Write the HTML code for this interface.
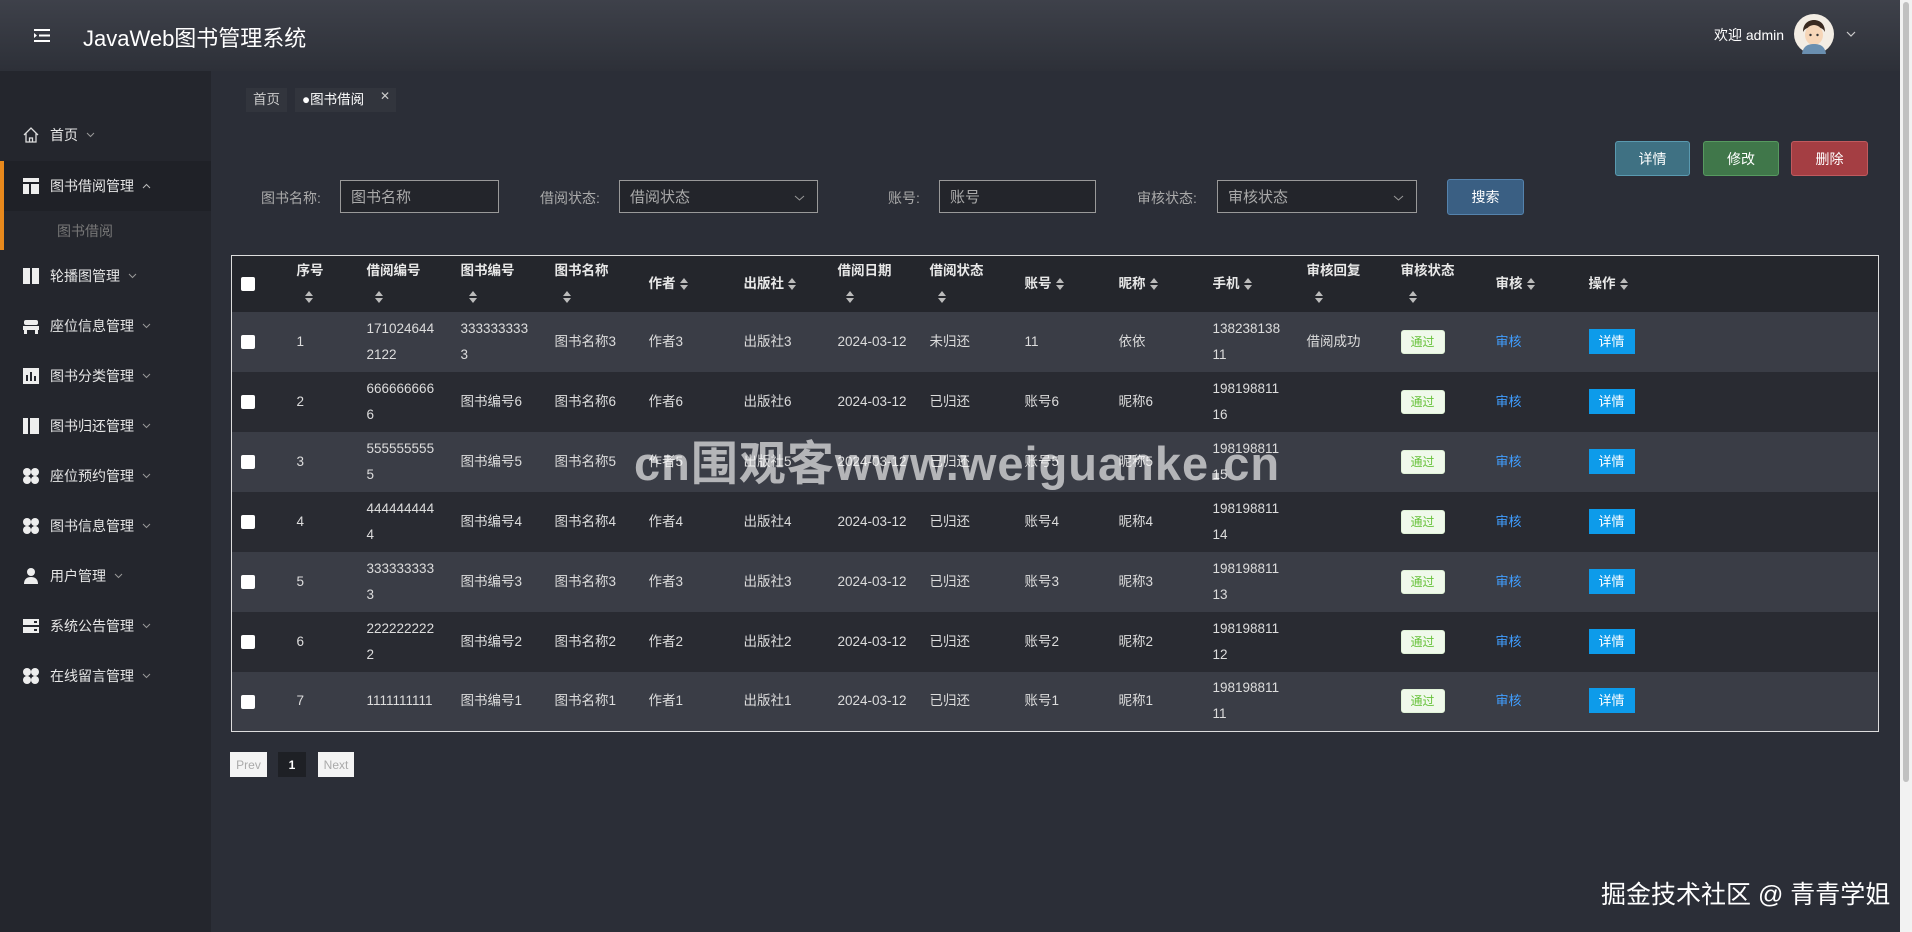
<!DOCTYPE html>
<html><head><meta charset="utf-8"><style>
*{margin:0;padding:0;box-sizing:border-box}
body{width:1912px;height:932px;overflow:hidden;background:#2b2e37;font-family:"Liberation Sans","Noto Sans CJK SC",sans-serif;color:#ddd;font-size:14px;position:relative}
.hdr{position:absolute;left:0;top:0;width:1900px;height:71px;background:linear-gradient(#3e414a,#2d3038);}
.side{position:absolute;left:0;top:71px;width:211px;height:861px;background:#24262d}
.sb{position:absolute;right:0;top:0;width:12px;height:932px;background:#f2f2f2}
.sb div{position:absolute;left:3px;top:2px;width:6px;height:780px;background:#c1c1c1;border-radius:3px}
.mi{position:absolute;left:22px;font-size:14px;color:#e6e6e6;display:flex;align-items:center}
.mi svg{margin-right:10px}
.mi svg.ch{margin-left:8px;margin-right:0}
.abs{position:absolute}
.lbl{position:absolute;color:#aaa;font-size:14px}
.inp{position:absolute;border:1px solid #999;background:#23252b;color:#aaa;font-size:15px;padding-left:10px;display:flex;align-items:center}
.btn{position:absolute;color:#fff;font-size:14px;display:flex;align-items:center;justify-content:center;border-radius:3px}
table{position:absolute;left:231px;top:255px;width:1648px;border:1px solid #ddd;border-collapse:collapse;table-layout:fixed}
td,th{text-align:left;vertical-align:middle;font-size:13.5px;line-height:26px;padding:0}
th{height:56px;background:#24262c;color:#e8e8e8;font-weight:bold}
td{height:60px;color:#ddd}
tr.o td{background:#3a3d46}
tr.e td{background:#292b32}
.cb{display:inline-block;width:14px;height:14px;background:#fff;border-radius:2px;margin-left:9px;vertical-align:middle}
.s{display:inline-block;vertical-align:middle;margin-left:4px}
.bd{display:inline-block;background:#f0f9eb;border:1px solid #e1f3d8;color:#67c23a;font-size:12px;line-height:22px;padding:0 9px;border-radius:3px}
.lk{color:#409eff;font-size:13px}
.db{display:inline-block;background:#0d9bea;color:#fff;font-size:13px;line-height:25px;padding:0 10px}
.pg{position:absolute;top:752px;height:25px;font-size:12px;display:flex;align-items:center;justify-content:center}
</style></head><body>
<div class="hdr">
 <svg class="abs" style="left:34px;top:29px" width="16" height="13" viewBox="0 0 16 13"><rect x="0" y="0" width="16" height="2" fill="#fff"/><rect x="5" y="5.5" width="11" height="2" fill="#fff"/><rect x="0" y="11" width="16" height="2" fill="#fff"/><path d="M0 4l3 2.5L0 9z" fill="#fff"/></svg>
 <div class="abs" style="left:83px;top:21px;font-size:22px;color:#fff">JavaWeb图书管理系统</div>
 <div class="abs" style="left:1714px;top:25px;font-size:14px;color:#fff">欢迎 admin</div>
 <svg class="abs" style="left:1794px;top:14px" width="40" height="40" viewBox="0 0 40 40"><circle cx="20" cy="20" r="20" fill="#f3ede4"/><path d="M9 18c0-9 6-12 11-12s11 3 11 12c-2-4-6-5-11-5s-9 1-11 5z" fill="#3a2a20"/><ellipse cx="20" cy="21" rx="9" ry="10" fill="#f6d6b8"/><path d="M8 40c1-8 6-10 12-10s11 2 12 10z" fill="#6a8fb0"/><circle cx="16.5" cy="21" r="1.2" fill="#333"/><circle cx="23.5" cy="21" r="1.2" fill="#333"/></svg>
 <svg class="abs" style="left:1846px;top:31px" width="10" height="6" viewBox="0 0 10 6"><path d="M1 1l4 4 4-4" stroke="#ccc" stroke-width="1.2" fill="none"/></svg>
</div>
<div class="side">
 <div class="abs" style="left:0;top:90px;width:211px;height:50px;background:#1f2127"></div>
 <div class="abs" style="left:0;top:90px;width:4px;height:89px;background:#e8891c"></div>
</div>
<div class="mi" style="top:125px"><svg width="18" height="18" viewBox="0 0 18 18"><path d="M2 9L9 2l7 7M4 7.5V16h10V7.5M7.5 16v-4h3v4" stroke="#ddd" stroke-width="1.3" fill="none"/></svg>首页<svg class="ch" width="9" height="6" viewBox="0 0 9 6"><path d="M1 1l3.5 3.5L8 1" stroke="#999" stroke-width="1" fill="none"/></svg></div>
<div class="mi" style="top:176px"><svg width="18" height="18" viewBox="0 0 18 18"><rect x="1" y="1" width="16" height="4" fill="#eee"/><rect x="1" y="7" width="6" height="10" fill="#eee"/><rect x="9" y="7" width="8" height="10" fill="#eee"/></svg>图书借阅管理<svg class="ch" width="9" height="6" viewBox="0 0 9 6"><path d="M1 5l3.5-3.5L8 5" stroke="#bbb" stroke-width="1" fill="none"/></svg></div>
<div class="abs" style="left:57px;top:221px;color:#777;font-size:14px">图书借阅</div>
<div class="mi" style="top:266px"><svg width="18" height="18" viewBox="0 0 18 18"><rect x="1" y="1" width="7" height="16" fill="#eee"/><rect x="10" y="1" width="7" height="16" fill="#eee"/></svg>轮播图管理<svg class="ch" width="9" height="6" viewBox="0 0 9 6"><path d="M1 1l3.5 3.5L8 1" stroke="#999" stroke-width="1" fill="none"/></svg></div>
<div class="mi" style="top:316px"><svg width="18" height="18" viewBox="0 0 18 18"><rect x="2" y="3" width="14" height="5" rx="2" fill="#eee"/><rect x="1" y="9" width="16" height="4" fill="#eee"/><rect x="2" y="13" width="3" height="4" fill="#eee"/><rect x="13" y="13" width="3" height="4" fill="#eee"/></svg>座位信息管理<svg class="ch" width="9" height="6" viewBox="0 0 9 6"><path d="M1 1l3.5 3.5L8 1" stroke="#999" stroke-width="1" fill="none"/></svg></div>
<div class="mi" style="top:366px"><svg width="18" height="18" viewBox="0 0 18 18"><rect x="1" y="1" width="16" height="16" fill="#eee"/><rect x="4" y="8" width="2" height="6" fill="#24262d"/><rect x="8" y="5" width="2" height="9" fill="#24262d"/><rect x="12" y="9" width="2" height="5" fill="#24262d"/></svg>图书分类管理<svg class="ch" width="9" height="6" viewBox="0 0 9 6"><path d="M1 1l3.5 3.5L8 1" stroke="#999" stroke-width="1" fill="none"/></svg></div>
<div class="mi" style="top:416px"><svg width="18" height="18" viewBox="0 0 18 18"><rect x="1" y="1" width="5" height="16" fill="#eee"/><rect x="8" y="1" width="9" height="16" fill="#eee"/></svg>图书归还管理<svg class="ch" width="9" height="6" viewBox="0 0 9 6"><path d="M1 1l3.5 3.5L8 1" stroke="#999" stroke-width="1" fill="none"/></svg></div>
<div class="mi" style="top:466px"><svg width="18" height="18" viewBox="0 0 18 18"><circle cx="5" cy="5" r="4" fill="#eee"/><circle cx="13" cy="5" r="4" fill="#eee"/><circle cx="5" cy="13" r="4" fill="#eee"/><circle cx="13" cy="13" r="4" fill="#eee"/></svg>座位预约管理<svg class="ch" width="9" height="6" viewBox="0 0 9 6"><path d="M1 1l3.5 3.5L8 1" stroke="#999" stroke-width="1" fill="none"/></svg></div>
<div class="mi" style="top:516px"><svg width="18" height="18" viewBox="0 0 18 18"><circle cx="5" cy="5" r="4" fill="#eee"/><circle cx="13" cy="5" r="4" fill="#eee"/><circle cx="5" cy="13" r="4" fill="#eee"/><circle cx="13" cy="13" r="4" fill="#eee"/></svg>图书信息管理<svg class="ch" width="9" height="6" viewBox="0 0 9 6"><path d="M1 1l3.5 3.5L8 1" stroke="#999" stroke-width="1" fill="none"/></svg></div>
<div class="mi" style="top:566px"><svg width="18" height="18" viewBox="0 0 18 18"><circle cx="9" cy="5" r="4" fill="#eee"/><path d="M2 17c0-5 3-7 7-7s7 2 7 7z" fill="#eee"/></svg>用户管理<svg class="ch" width="9" height="6" viewBox="0 0 9 6"><path d="M1 1l3.5 3.5L8 1" stroke="#999" stroke-width="1" fill="none"/></svg></div>
<div class="mi" style="top:616px"><svg width="18" height="18" viewBox="0 0 18 18"><rect x="1" y="2" width="16" height="6" fill="#eee"/><rect x="1" y="10" width="16" height="6" fill="#eee"/><rect x="12" y="4" width="3" height="2" fill="#24262d"/><rect x="12" y="12" width="3" height="2" fill="#24262d"/></svg>系统公告管理<svg class="ch" width="9" height="6" viewBox="0 0 9 6"><path d="M1 1l3.5 3.5L8 1" stroke="#999" stroke-width="1" fill="none"/></svg></div>
<div class="mi" style="top:666px"><svg width="18" height="18" viewBox="0 0 18 18"><circle cx="5" cy="5" r="4" fill="#eee"/><circle cx="13" cy="5" r="4" fill="#eee"/><circle cx="5" cy="13" r="4" fill="#eee"/><circle cx="13" cy="13" r="4" fill="#eee"/></svg>在线留言管理<svg class="ch" width="9" height="6" viewBox="0 0 9 6"><path d="M1 1l3.5 3.5L8 1" stroke="#999" stroke-width="1" fill="none"/></svg></div>

<div class="abs" style="left:246px;top:88px;width:41px;height:24px;background:#32353d;color:#ccc;font-size:13.5px;line-height:24px;text-align:center">首页</div>
<div class="abs" style="left:295px;top:88px;width:101px;height:24px;background:#32353d;color:#fff;font-size:13.5px;line-height:24px;padding-left:7px">●图书借阅<span style="position:absolute;left:85px;top:-4px;font-size:12px;color:#ccc">✕</span></div>

<div class="btn" style="left:1615px;top:141px;width:75px;height:35px;background:#3f7183;border:1px solid #5a9ab0">详情</div>
<div class="btn" style="left:1703px;top:141px;width:76px;height:35px;background:#40774a;border:1px solid #579a60">修改</div>
<div class="btn" style="left:1791px;top:141px;width:77px;height:35px;background:#a43e43;border:1px solid #c05a5e">删除</div>

<div class="lbl" style="left:261px;top:188px">图书名称:</div>
<div class="inp" style="left:340px;top:180px;width:159px;height:33px">图书名称</div>
<div class="lbl" style="left:540px;top:188px">借阅状态:</div>
<div class="inp" style="left:619px;top:180px;width:199px;height:33px">借阅状态<svg style="position:absolute;right:12px;top:14px" width="11" height="6" viewBox="0 0 11 6"><path d="M1 1l4.5 4L10 1" stroke="#999" stroke-width="1" fill="none"/></svg></div>
<div class="lbl" style="left:888px;top:188px">账号:</div>
<div class="inp" style="left:939px;top:180px;width:157px;height:33px">账号</div>
<div class="lbl" style="left:1137px;top:188px">审核状态:</div>
<div class="inp" style="left:1217px;top:180px;width:200px;height:33px">审核状态<svg style="position:absolute;right:12px;top:14px" width="11" height="6" viewBox="0 0 11 6"><path d="M1 1l4.5 4L10 1" stroke="#999" stroke-width="1" fill="none"/></svg></div>
<div class="btn" style="left:1447px;top:179px;width:77px;height:36px;background:#3a5f83;border:1px solid #5583ad">搜索</div>

<table>
<colgroup><col style="width:65px"><col style="width:70px"><col style="width:94px"><col style="width:94px"><col style="width:94px"><col style="width:95px"><col style="width:94px"><col style="width:92px"><col style="width:95px"><col style="width:94px"><col style="width:94px"><col style="width:94px"><col style="width:94px"><col style="width:95px"><col style="width:93px"><col></colgroup>
<tr><th><span class="cb"></span></th>
<th>序号<br><svg class="s" style="margin-left:8px" width="8" height="12" viewBox="0 0 8 12"><path d="M4 0l4 5H0zM4 12l4-5H0z" fill="#bbb"/></svg></th>
<th>借阅编号<br><svg class="s" style="margin-left:8px" width="8" height="12" viewBox="0 0 8 12"><path d="M4 0l4 5H0zM4 12l4-5H0z" fill="#bbb"/></svg></th>
<th>图书编号<br><svg class="s" style="margin-left:8px" width="8" height="12" viewBox="0 0 8 12"><path d="M4 0l4 5H0zM4 12l4-5H0z" fill="#bbb"/></svg></th>
<th>图书名称<br><svg class="s" style="margin-left:8px" width="8" height="12" viewBox="0 0 8 12"><path d="M4 0l4 5H0zM4 12l4-5H0z" fill="#bbb"/></svg></th>
<th>作者<svg class="s" width="8" height="12" viewBox="0 0 8 12"><path d="M4 0l4 5H0zM4 12l4-5H0z" fill="#bbb"/></svg></th>
<th>出版社<svg class="s" width="8" height="12" viewBox="0 0 8 12"><path d="M4 0l4 5H0zM4 12l4-5H0z" fill="#bbb"/></svg></th>
<th>借阅日期<br><svg class="s" style="margin-left:8px" width="8" height="12" viewBox="0 0 8 12"><path d="M4 0l4 5H0zM4 12l4-5H0z" fill="#bbb"/></svg></th>
<th>借阅状态<br><svg class="s" style="margin-left:8px" width="8" height="12" viewBox="0 0 8 12"><path d="M4 0l4 5H0zM4 12l4-5H0z" fill="#bbb"/></svg></th>
<th>账号<svg class="s" width="8" height="12" viewBox="0 0 8 12"><path d="M4 0l4 5H0zM4 12l4-5H0z" fill="#bbb"/></svg></th>
<th>昵称<svg class="s" width="8" height="12" viewBox="0 0 8 12"><path d="M4 0l4 5H0zM4 12l4-5H0z" fill="#bbb"/></svg></th>
<th>手机<svg class="s" width="8" height="12" viewBox="0 0 8 12"><path d="M4 0l4 5H0zM4 12l4-5H0z" fill="#bbb"/></svg></th>
<th>审核回复<br><svg class="s" style="margin-left:8px" width="8" height="12" viewBox="0 0 8 12"><path d="M4 0l4 5H0zM4 12l4-5H0z" fill="#bbb"/></svg></th>
<th>审核状态<br><svg class="s" style="margin-left:8px" width="8" height="12" viewBox="0 0 8 12"><path d="M4 0l4 5H0zM4 12l4-5H0z" fill="#bbb"/></svg></th>
<th>审核<svg class="s" width="8" height="12" viewBox="0 0 8 12"><path d="M4 0l4 5H0zM4 12l4-5H0z" fill="#bbb"/></svg></th>
<th>操作<svg class="s" width="8" height="12" viewBox="0 0 8 12"><path d="M4 0l4 5H0zM4 12l4-5H0z" fill="#bbb"/></svg></th></tr>
<tr class="o"><td><span class="cb"></span></td><td>1</td><td>171024644<br>2122</td><td>333333333<br>3</td><td>图书名称3</td><td>作者3</td><td>出版社3</td><td>2024-03-12</td><td>未归还</td><td>11</td><td>依依</td><td>138238138<br>11</td><td>借阅成功</td><td><span class="bd">通过</span></td><td><span class="lk">审核</span></td><td><span class="db">详情</span></td></tr>
<tr class="e"><td><span class="cb"></span></td><td>2</td><td>666666666<br>6</td><td>图书编号6</td><td>图书名称6</td><td>作者6</td><td>出版社6</td><td>2024-03-12</td><td>已归还</td><td>账号6</td><td>昵称6</td><td>198198811<br>16</td><td></td><td><span class="bd">通过</span></td><td><span class="lk">审核</span></td><td><span class="db">详情</span></td></tr>
<tr class="o"><td><span class="cb"></span></td><td>3</td><td>555555555<br>5</td><td>图书编号5</td><td>图书名称5</td><td>作者5</td><td>出版社5</td><td>2024-03-12</td><td>已归还</td><td>账号5</td><td>昵称5</td><td>198198811<br>15</td><td></td><td><span class="bd">通过</span></td><td><span class="lk">审核</span></td><td><span class="db">详情</span></td></tr>
<tr class="e"><td><span class="cb"></span></td><td>4</td><td>444444444<br>4</td><td>图书编号4</td><td>图书名称4</td><td>作者4</td><td>出版社4</td><td>2024-03-12</td><td>已归还</td><td>账号4</td><td>昵称4</td><td>198198811<br>14</td><td></td><td><span class="bd">通过</span></td><td><span class="lk">审核</span></td><td><span class="db">详情</span></td></tr>
<tr class="o"><td><span class="cb"></span></td><td>5</td><td>333333333<br>3</td><td>图书编号3</td><td>图书名称3</td><td>作者3</td><td>出版社3</td><td>2024-03-12</td><td>已归还</td><td>账号3</td><td>昵称3</td><td>198198811<br>13</td><td></td><td><span class="bd">通过</span></td><td><span class="lk">审核</span></td><td><span class="db">详情</span></td></tr>
<tr class="e"><td><span class="cb"></span></td><td>6</td><td>222222222<br>2</td><td>图书编号2</td><td>图书名称2</td><td>作者2</td><td>出版社2</td><td>2024-03-12</td><td>已归还</td><td>账号2</td><td>昵称2</td><td>198198811<br>12</td><td></td><td><span class="bd">通过</span></td><td><span class="lk">审核</span></td><td><span class="db">详情</span></td></tr>
<tr class="o"><td><span class="cb"></span></td><td>7</td><td>1111111111</td><td>图书编号1</td><td>图书名称1</td><td>作者1</td><td>出版社1</td><td>2024-03-12</td><td>已归还</td><td>账号1</td><td>昵称1</td><td>198198811<br>11</td><td></td><td><span class="bd">通过</span></td><td><span class="lk">审核</span></td><td><span class="db">详情</span></td></tr>
</table>

<div class="pg" style="left:230px;width:37px;background:#f4f4f4;color:#aaa">Prev</div>
<div class="pg" style="left:278px;width:28px;background:#1e2025;color:#fff;font-weight:bold">1</div>
<div class="pg" style="left:318px;width:36px;background:#f4f4f4;color:#aaa">Next</div>

<div class="abs" style="left:634px;top:425px;font-size:47px;font-weight:bold;color:rgba(255,255,255,0.62);letter-spacing:1px">cn围观客www.weiguanke.cn</div>
<div class="abs" style="left:1601px;top:875px;font-size:25px;color:#fff">掘金技术社区 @ 青青学姐</div>
<div class="sb"><div></div></div>
</body></html>
